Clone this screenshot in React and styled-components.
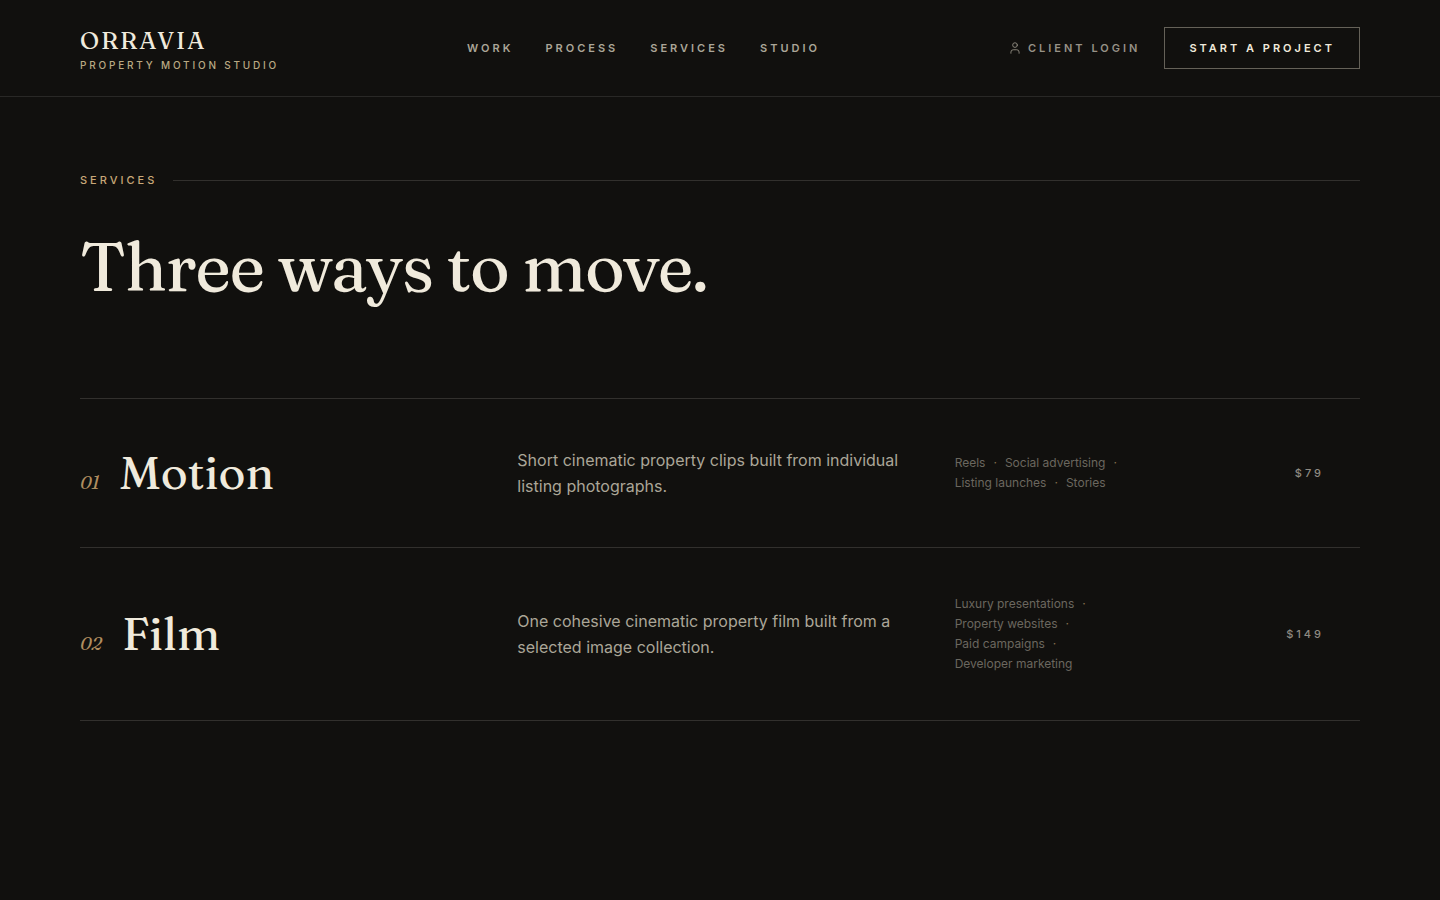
import styled, { createGlobalStyle } from 'styled-components';
import { User } from 'lucide-react';

const GlobalStyle = createGlobalStyle`
  *, *::before, *::after {
    box-sizing: border-box;
  }

  body {
    margin: 0;
    background: #11100e;
    color: #f0eadc;
    font-family: Inter, "Liberation Sans", sans-serif;
  }
`;

const serif = 'Fraunces, "Liberation Serif", serif';

const Header = styled.header`
  display: flex;
  justify-content: space-between;
  align-items: center;
  height: 97px;
  padding: 0 80px;
  border-bottom: 1px solid #292826;
`;

const Brand = styled.a`
  display: flex;
  flex-direction: column;
  gap: 4px;
  padding-top: 2px;
  text-decoration: none;
`;

const BrandName = styled.span`
  font-family: ${serif};
  font-size: 24px;
  font-weight: 500;
  line-height: 28px;
  letter-spacing: 0.08em;
  color: #f0eadc;
`;

const BrandTagline = styled.span`
  font-size: 10px;
  font-weight: 500;
  line-height: 12px;
  letter-spacing: 0.28em;
  color: #b9a983;
`;

const Nav = styled.nav`
  display: flex;
  gap: 32px;
`;

const NavLink = styled.a`
  display: flex;
  align-items: center;
  gap: 6px;
  font-size: 11px;
  font-weight: 600;
  line-height: 16px;
  letter-spacing: 3px;
  text-transform: uppercase;
  text-decoration: none;
  color: ${props => props.$light ? '#979287' : '#aba698'};
`;

const Actions = styled.div`
  display: flex;
  align-items: center;
  gap: 24px;
`;

const StartButton = styled.button`
  padding: 12px 24px;
  border: 1px solid #656158;
  border-radius: 0;
  background: transparent;
  color: #f0eadc;
  font-family: inherit;
  font-size: 11px;
  font-weight: 600;
  line-height: 16px;
  letter-spacing: 3px;
  text-transform: uppercase;
  cursor: pointer;
`;

const Section = styled.section`
  padding: 75px 80px 176px;
`;

const Eyebrow = styled.div`
  display: flex;
  align-items: center;
  gap: 16px;
  font-size: 11px;
  font-weight: 500;
  line-height: 16px;
  letter-spacing: 3px;
  text-transform: uppercase;
  color: #c8a878;

  &::after {
    content: '';
    flex: 1;
    height: 1px;
    background: #32302d;
  }
`;

const Heading = styled.h2`
  margin: 40px 0 94px;
  font-family: ${serif};
  font-size: 68px;
  font-weight: 400;
  line-height: 76px;
  letter-spacing: -0.02em;
`;

const ServiceList = styled.div`
  border-top: 1px solid #32302d;
`;

const ServiceRow = styled.article`
  display: grid;
  grid-template-columns: repeat(12, 1fr);
  column-gap: 32px;
  align-items: center;
  padding: 48px 0;
  border-bottom: 1px solid #32302d;
`;

const ServiceTitle = styled.div`
  grid-column: span 4;
  display: flex;
  align-items: baseline;
  gap: 20px;
  font-family: ${serif};
`;

const ServiceNumber = styled.span`
  font-size: 18px;
  font-style: italic;
  color: #b08d5f;
`;

const ServiceName = styled.h3`
  margin: 0;
  font-size: 46px;
  font-weight: 400;
  line-height: 48px;
`;

const Description = styled.p`
  grid-column: span 4;
  margin: 0;
  font-size: 16px;
  line-height: 26px;
  color: #aba698;
`;

const Uses = styled.ul`
  grid-column: span 2;
  display: flex;
  flex-wrap: wrap;
  gap: 4px 8px;
  margin: 0;
  padding: 0;
  list-style: none;
  font-size: 12px;
  line-height: 16px;
  color: #6b675f;
`;

const Dot = styled.span`
  margin-left: 8px;
  color: #86704f;
`;

const Price = styled.div`
  grid-column: span 2;
  padding-right: 36px;
  font-size: 11px;
  font-weight: 500;
  line-height: 16px;
  letter-spacing: 3px;
  text-align: right;
  color: #8f8b82;
`;

const navItems = ['Work', 'Process', 'Services', 'Studio'];

const services = [
  {
    number: '01',
    name: 'Motion',
    description: 'Short cinematic property clips built from individual listing photographs.',
    uses: ['Reels', 'Social advertising', 'Listing launches', 'Stories'],
    price: '$79',
  },
  {
    number: '02',
    name: 'Film',
    description: 'One cohesive cinematic property film built from a selected image collection.',
    uses: ['Luxury presentations', 'Property websites', 'Paid campaigns', 'Developer marketing'],
    price: '$149',
  },
];

function App() {
  return (
    <>
      <GlobalStyle />
      <Header>
        <Brand href="#">
          <BrandName>ORRAVIA</BrandName>
          <BrandTagline>PROPERTY MOTION STUDIO</BrandTagline>
        </Brand>
        <Nav>
          {navItems.map(item => (
            <NavLink key={item} href={`#${item.toLowerCase()}`}>{item}</NavLink>
          ))}
        </Nav>
        <Actions>
          <NavLink href="#login" $light>
            <User size={14} strokeWidth={1.5} />
            Client login
          </NavLink>
          <StartButton type="button">Start a project</StartButton>
        </Actions>
      </Header>
      <main>
        <Section id="services">
          <Eyebrow>Services</Eyebrow>
          <Heading>Three ways to move.</Heading>
          <ServiceList>
            {services.map(service => (
              <ServiceRow key={service.number}>
                <ServiceTitle>
                  <ServiceNumber>{service.number}</ServiceNumber>
                  <ServiceName>{service.name}</ServiceName>
                </ServiceTitle>
                <Description>{service.description}</Description>
                <Uses>
                  {service.uses.map((use, i) => (
                    <li key={use}>
                      {use}
                      {i < service.uses.length - 1 && <Dot>·</Dot>}
                    </li>
                  ))}
                </Uses>
                <Price>{service.price}</Price>
              </ServiceRow>
            ))}
          </ServiceList>
        </Section>
      </main>
    </>
  );
}

export default App;
